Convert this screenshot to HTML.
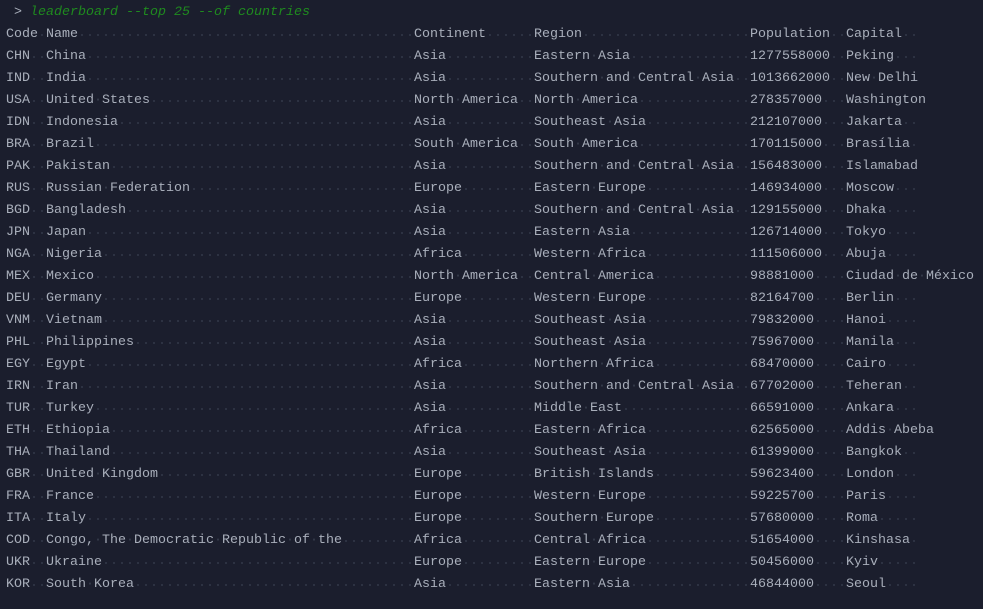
<!DOCTYPE html><html><head><meta charset="utf-8"><style>
body{margin:0;background:#1b1e2d;width:983px;height:609px;overflow:hidden;font-family:"Liberation Mono","DejaVu Sans Mono",monospace;font-size:13.33px;color:#a9afbb}
.p{position:absolute;left:14px;top:3px;height:20px;line-height:20px;white-space:pre}
.p i{color:#1f8a1f}
.t{position:absolute;left:6px;top:24px}
.r{height:22px;line-height:22px;white-space:nowrap;display:flex}
.r span{display:block;height:22px;background-image:radial-gradient(circle,#363c4c 0.7px,transparent 1.1px);background-size:8px 22px;background-position:0 0}
.r b{font-weight:normal;background:#1b1e2d}
u{text-decoration:none;color:#3a404f}
.r span:nth-child(1){width:40px}.r span:nth-child(2){width:368px}.r span:nth-child(3){width:120px}.r span:nth-child(4){width:216px}.r span:nth-child(5){width:96px}.r span:nth-child(6){width:72px}
</style></head><body>
<div class="p">&gt; <i>leaderboard --top 25 --of countries</i></div>
<div class="t">
<div class="r"><span><b>Code</b></span><span><b>Name</b></span><span><b>Continent</b></span><span><b>Region</b></span><span><b>Population</b></span><span><b>Capital</b></span></div>
<div class="r"><span><b>CHN</b></span><span><b>China</b></span><span><b>Asia</b></span><span><b>Eastern<u>·</u>Asia</b></span><span><b>1277558000</b></span><span><b>Peking</b></span></div>
<div class="r"><span><b>IND</b></span><span><b>India</b></span><span><b>Asia</b></span><span><b>Southern<u>·</u>and<u>·</u>Central<u>·</u>Asia</b></span><span><b>1013662000</b></span><span><b>New<u>·</u>Delhi</b></span></div>
<div class="r"><span><b>USA</b></span><span><b>United<u>·</u>States</b></span><span><b>North<u>·</u>America</b></span><span><b>North<u>·</u>America</b></span><span><b>278357000</b></span><span><b>Washington</b></span></div>
<div class="r"><span><b>IDN</b></span><span><b>Indonesia</b></span><span><b>Asia</b></span><span><b>Southeast<u>·</u>Asia</b></span><span><b>212107000</b></span><span><b>Jakarta</b></span></div>
<div class="r"><span><b>BRA</b></span><span><b>Brazil</b></span><span><b>South<u>·</u>America</b></span><span><b>South<u>·</u>America</b></span><span><b>170115000</b></span><span><b>Brasília</b></span></div>
<div class="r"><span><b>PAK</b></span><span><b>Pakistan</b></span><span><b>Asia</b></span><span><b>Southern<u>·</u>and<u>·</u>Central<u>·</u>Asia</b></span><span><b>156483000</b></span><span><b>Islamabad</b></span></div>
<div class="r"><span><b>RUS</b></span><span><b>Russian<u>·</u>Federation</b></span><span><b>Europe</b></span><span><b>Eastern<u>·</u>Europe</b></span><span><b>146934000</b></span><span><b>Moscow</b></span></div>
<div class="r"><span><b>BGD</b></span><span><b>Bangladesh</b></span><span><b>Asia</b></span><span><b>Southern<u>·</u>and<u>·</u>Central<u>·</u>Asia</b></span><span><b>129155000</b></span><span><b>Dhaka</b></span></div>
<div class="r"><span><b>JPN</b></span><span><b>Japan</b></span><span><b>Asia</b></span><span><b>Eastern<u>·</u>Asia</b></span><span><b>126714000</b></span><span><b>Tokyo</b></span></div>
<div class="r"><span><b>NGA</b></span><span><b>Nigeria</b></span><span><b>Africa</b></span><span><b>Western<u>·</u>Africa</b></span><span><b>111506000</b></span><span><b>Abuja</b></span></div>
<div class="r"><span><b>MEX</b></span><span><b>Mexico</b></span><span><b>North<u>·</u>America</b></span><span><b>Central<u>·</u>America</b></span><span><b>98881000</b></span><span><b>Ciudad<u>·</u>de<u>·</u>México</b></span></div>
<div class="r"><span><b>DEU</b></span><span><b>Germany</b></span><span><b>Europe</b></span><span><b>Western<u>·</u>Europe</b></span><span><b>82164700</b></span><span><b>Berlin</b></span></div>
<div class="r"><span><b>VNM</b></span><span><b>Vietnam</b></span><span><b>Asia</b></span><span><b>Southeast<u>·</u>Asia</b></span><span><b>79832000</b></span><span><b>Hanoi</b></span></div>
<div class="r"><span><b>PHL</b></span><span><b>Philippines</b></span><span><b>Asia</b></span><span><b>Southeast<u>·</u>Asia</b></span><span><b>75967000</b></span><span><b>Manila</b></span></div>
<div class="r"><span><b>EGY</b></span><span><b>Egypt</b></span><span><b>Africa</b></span><span><b>Northern<u>·</u>Africa</b></span><span><b>68470000</b></span><span><b>Cairo</b></span></div>
<div class="r"><span><b>IRN</b></span><span><b>Iran</b></span><span><b>Asia</b></span><span><b>Southern<u>·</u>and<u>·</u>Central<u>·</u>Asia</b></span><span><b>67702000</b></span><span><b>Teheran</b></span></div>
<div class="r"><span><b>TUR</b></span><span><b>Turkey</b></span><span><b>Asia</b></span><span><b>Middle<u>·</u>East</b></span><span><b>66591000</b></span><span><b>Ankara</b></span></div>
<div class="r"><span><b>ETH</b></span><span><b>Ethiopia</b></span><span><b>Africa</b></span><span><b>Eastern<u>·</u>Africa</b></span><span><b>62565000</b></span><span><b>Addis<u>·</u>Abeba</b></span></div>
<div class="r"><span><b>THA</b></span><span><b>Thailand</b></span><span><b>Asia</b></span><span><b>Southeast<u>·</u>Asia</b></span><span><b>61399000</b></span><span><b>Bangkok</b></span></div>
<div class="r"><span><b>GBR</b></span><span><b>United<u>·</u>Kingdom</b></span><span><b>Europe</b></span><span><b>British<u>·</u>Islands</b></span><span><b>59623400</b></span><span><b>London</b></span></div>
<div class="r"><span><b>FRA</b></span><span><b>France</b></span><span><b>Europe</b></span><span><b>Western<u>·</u>Europe</b></span><span><b>59225700</b></span><span><b>Paris</b></span></div>
<div class="r"><span><b>ITA</b></span><span><b>Italy</b></span><span><b>Europe</b></span><span><b>Southern<u>·</u>Europe</b></span><span><b>57680000</b></span><span><b>Roma</b></span></div>
<div class="r"><span><b>COD</b></span><span><b>Congo,<u>·</u>The<u>·</u>Democratic<u>·</u>Republic<u>·</u>of<u>·</u>the</b></span><span><b>Africa</b></span><span><b>Central<u>·</u>Africa</b></span><span><b>51654000</b></span><span><b>Kinshasa</b></span></div>
<div class="r"><span><b>UKR</b></span><span><b>Ukraine</b></span><span><b>Europe</b></span><span><b>Eastern<u>·</u>Europe</b></span><span><b>50456000</b></span><span><b>Kyiv</b></span></div>
<div class="r"><span><b>KOR</b></span><span><b>South<u>·</u>Korea</b></span><span><b>Asia</b></span><span><b>Eastern<u>·</u>Asia</b></span><span><b>46844000</b></span><span><b>Seoul</b></span></div>
</div>
</body></html>
